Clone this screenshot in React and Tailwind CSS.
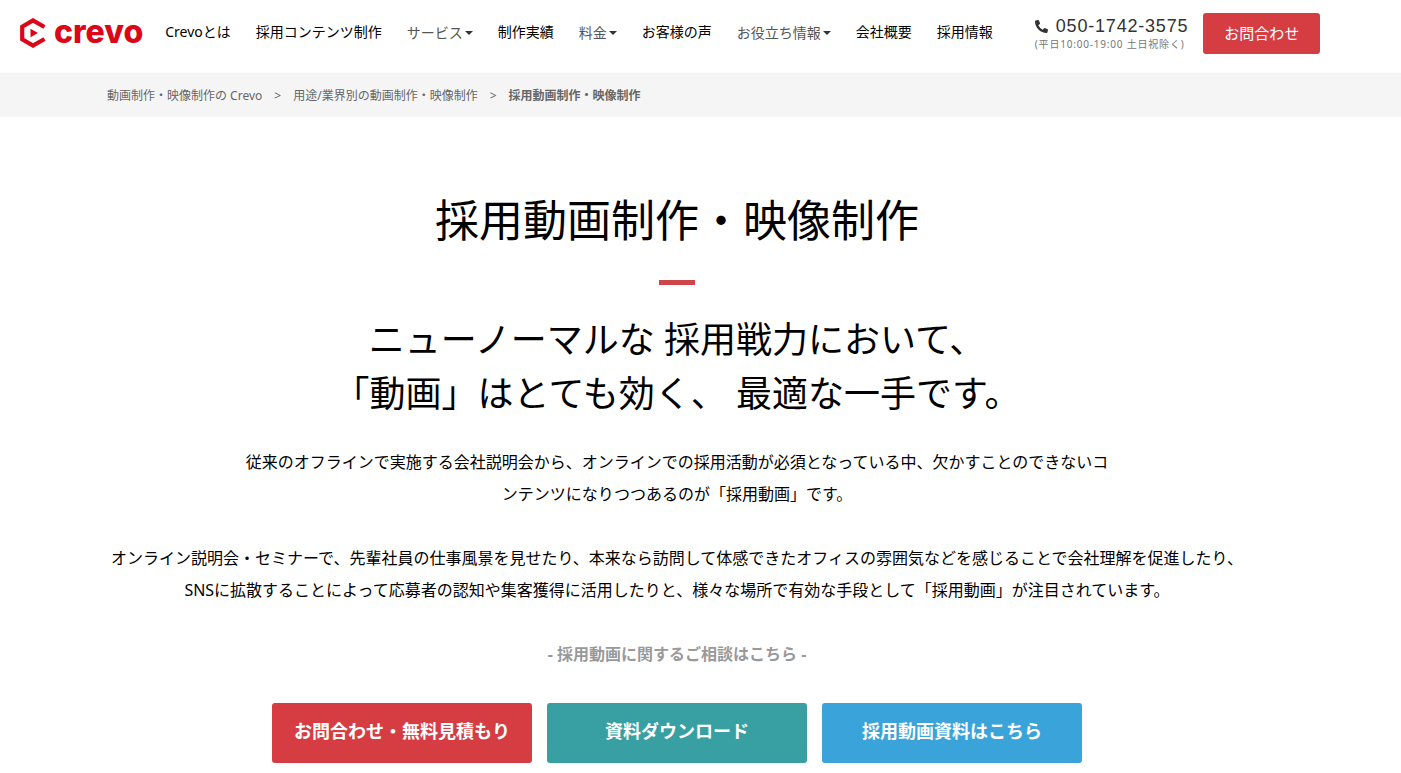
import React from "react";
import { FaPhoneAlt } from "react-icons/fa";

const navItems = [
  { label: "Crevoとは" },
  { label: "採用コンテンツ制作" },
  { label: "サービス", menu: true },
  { label: "制作実績" },
  { label: "料金", menu: true },
  { label: "お客様の声" },
  { label: "お役立ち情報", menu: true },
  { label: "会社概要" },
  { label: "採用情報" },
];

const ctas = [
  { label: "お問合わせ・無料見積もり", color: "bg-[#d63d43]" },
  { label: "資料ダウンロード", color: "bg-[#389fa2]" },
  { label: "採用動画資料はこちら", color: "bg-[#3aa3da]" },
];

function Logo() {
  return (
    <a
      href="#"
      className="flex shrink-0 items-center gap-2 text-[#dc0618]"
      aria-label="crevo"
    >
      <svg width="26" height="30" viewBox="0 0 26 30" fill="none">
        <path
          d="M24.5 9 L13 2.4 L2.2 8.6 V21.4 L13 27.6 L24.5 21"
          stroke="currentColor"
          strokeWidth="4.2"
        />
        <path d="M10.5 10.8 L18 15 L10.5 19.2 Z" fill="currentColor" />
      </svg>
      <span className="pb-[2px] font-['Inter',sans-serif] text-[32px] leading-8 font-extrabold">
        crevo
      </span>
    </a>
  );
}

function NavItem({ label, menu }) {
  if (menu) {
    return (
      <button
        type="button"
        className="flex items-center gap-[2px] pt-[2px] text-[#555]"
      >
        {label}
        <svg width="8" height="4" viewBox="0 0 8 4">
          <path d="M0 0 H8 L4 4 Z" fill="#333" />
        </svg>
      </button>
    );
  }
  return <a href="#">{label}</a>;
}

function Header() {
  return (
    <header className="flex h-[73px] items-start pl-5 whitespace-nowrap">
      <div className="flex h-[65px] items-center">
        <Logo />
        <nav className="ml-[22px] flex items-center gap-[25px] pb-[2px] text-sm">
          {navItems.map((item) => (
            <NavItem key={item.label} {...item} />
          ))}
        </nav>
      </div>
      <div className="mt-4 ml-[42px] tracking-wider">
        <a
          href="tel:050-1742-3575"
          className="flex items-center gap-2 font-['Liberation_Sans',sans-serif] text-lg leading-5 text-[#333]"
        >
          <FaPhoneAlt size={13} />
          050-1742-3575
        </a>
        <p className="text-[10px] leading-4 text-[#777]">
          (平日10:00-19:00 土日祝除く)
        </p>
      </div>
      <a
        href="#"
        className="mt-[13px] ml-[15px] flex h-[41px] items-center rounded-[3px] bg-[#d63d43] px-[21px] text-[15px] text-white"
      >
        お問合わせ
      </a>
    </header>
  );
}

function Breadcrumb() {
  return (
    <nav className="bg-[#f5f5f5] pt-[2px] pr-[47px] text-xs leading-[42px] text-[#666]">
      <ol className="mx-auto flex max-w-[1140px] gap-3">
        <li>
          <a href="#">動画制作・映像制作の Crevo</a>
        </li>
        <li aria-hidden="true">&gt;</li>
        <li>
          <a href="#">用途/業界別の動画制作・映像制作</a>
        </li>
        <li aria-hidden="true">&gt;</li>
        <li className="font-bold">採用動画制作・映像制作</li>
      </ol>
    </nav>
  );
}

export default function App() {
  return (
    <div className="bg-white font-['Noto_Sans','Noto_Sans_CJK_JP',sans-serif] text-black">
      <Header />
      <Breadcrumb />
      <main className="pr-[47px] text-center">
        <h1 className="pt-[70px] text-[44px] leading-[66px]">
          採用動画制作・映像制作
        </h1>
        <div className="mx-auto mt-[27px] h-[5px] w-9 bg-[#d04549]" />
        <h2 className="mt-7 text-4xl leading-[54px]">
          ニューノーマルな 採用戦力において、
          <br />
          「動画」はとても効く、 最適な一手です。
        </h2>
        <p className="mt-[25px] leading-8">
          従来のオフラインで実施する会社説明会から、オンラインでの採用活動が必須となっている中、欠かすことのできないコ
          <br />
          ンテンツになりつつあるのが「採用動画」です。
        </p>
        <p className="mt-8 leading-8">
          オンライン説明会・セミナーで、先輩社員の仕事風景を見せたり、本来なら訪問して体感できたオフィスの雰囲気などを感じることで会社理解を促進したり、
          <br />
          SNSに拡散することによって応募者の認知や集客獲得に活用したりと、様々な場所で有効な手段として「採用動画」が注目されています。
        </p>
        <p className="mt-8 leading-8 font-bold text-[#999]">
          - 採用動画に関するご相談はこちら -
        </p>
        <div className="mt-[33px] flex justify-center gap-[15px]">
          {ctas.map((cta) => (
            <a
              key={cta.label}
              href="#"
              className={`w-[260px] rounded-[3px] pb-1 text-lg leading-[56px] font-bold text-white ${cta.color}`}
            >
              {cta.label}
            </a>
          ))}
        </div>
      </main>
    </div>
  );
}
